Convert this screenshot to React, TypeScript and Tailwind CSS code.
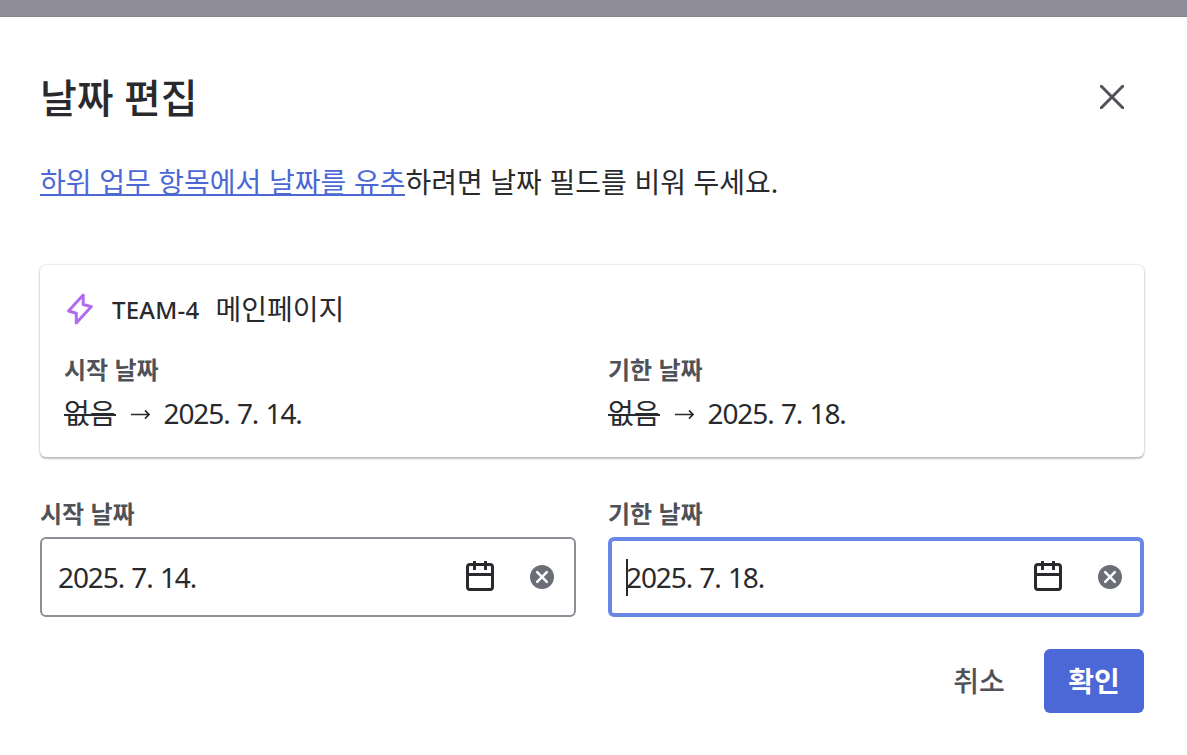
import React from 'react';

function BoltIcon() {
  return (
    <svg width="32" height="32" viewBox="0 0 32 32" fill="none" stroke="#af6cf0" strokeWidth="3" strokeLinejoin="round">
      <path d="M19.2 2.1 4.5 18 12.3 20.2V29.9L27.4 13.6 19.2 11.5Z" />
    </svg>
  );
}

function CalendarIcon() {
  return (
    <svg className="mr-9 mb-[2px] shrink-0" width="28" height="30" viewBox="0 0 28 30" fill="none" stroke="#292a2e" strokeWidth="3">
      <rect x="1.5" y="3.5" width="25" height="25" rx="2.5" />
      <path d="M1.5 13.5h25M8.5 0v9M19.5 0v9" />
    </svg>
  );
}

function ClearIcon() {
  return (
    <svg className="shrink-0" width="24" height="24" viewBox="0 0 24 24">
      <circle cx="12" cy="12" r="12" fill="#6b6e76" />
      <path d="M7.2 7.2l9.6 9.6M16.8 7.2l-9.6 9.6" stroke="#fff" strokeWidth="2.5" strokeLinecap="round" />
    </svg>
  );
}

function DateText({ children }: { children: string }) {
  return <span className="tracking-[-1.1px] [word-spacing:1.1px]">{children}</span>;
}

function Label({ children }: { children: string }) {
  return <div className="h-8 pt-px text-[24px] leading-8 font-bold text-[#505258]">{children}</div>;
}

function Change({ label, date }: { label: string; date: string }) {
  return (
    <div className="w-[544px] shrink-0">
      <Label>{label}</Label>
      <div className="mt-2 flex h-10 items-center">
        <span className="relative">
          없음
          <span className="absolute inset-x-0 top-[21px] h-[2px] bg-[#292a2e]" />
        </span>
        <svg className="mr-[13px] ml-[15px]" width="20" height="14" viewBox="0 0 20 14" fill="none" stroke="#292a2e" strokeWidth="1.7">
          <path d="M0 8.5h18M14 4.3 18 8.5 14 12.7" />
        </svg>
        <DateText>{date}</DateText>
      </div>
    </div>
  );
}

function Field({ label, date, focused = false }: { label: string; date: string; focused?: boolean }) {
  return (
    <div className="w-[536px]">
      <Label>{label}</Label>
      <div
        className={
          focused
            ? 'mt-2 flex h-20 items-center rounded-[6px] border-4 border-[#6988e6] pr-[18px] pl-[14px]'
            : 'mt-2 flex h-20 items-center rounded-[6px] border-2 border-[#8c8f97] pr-5 pl-4'
        }
      >
        <div className="relative flex-1">
          {focused && <span className="absolute top-[2px] left-0 h-[37px] w-[2px] bg-[#292a2e]" />}
          <DateText>{date}</DateText>
        </div>
        <CalendarIcon />
        <ClearIcon />
      </div>
    </div>
  );
}

export default function App() {
  return (
    <div
      lang="ko"
      className="h-[755px] w-[1187px] overflow-hidden bg-white font-['Noto_Sans','Noto_Sans_CJK_KR',sans-serif] text-[28px] leading-10 text-[#292a2e]"
    >
      <div className="h-[17px] border-b border-[#84838d] bg-[#8f8e98]" />
      <div className="w-[1144px] pl-10">
        <header className="flex h-[104px] items-center justify-between pt-[56px] pr-5">
          <h1 className="pt-[2px] text-[40px] leading-[48px] font-medium">날짜 편집</h1>
          <svg width="24" height="24" viewBox="0 0 24 24" fill="none" stroke="#505258" strokeWidth="3" strokeLinecap="round">
            <path d="M1.3 1.3l21.4 21.4M22.7 1.3 1.3 22.7" />
          </svg>
        </header>
        <p className="mt-10 h-10 pt-px whitespace-nowrap [word-spacing:0.35px]">
          <a className="inline-block h-[34px] border-b-2 border-[#4c67d6] text-[#4c67d6]">하위 업무 항목에서 날짜를 유추</a>하려면 날짜 필드를 비워 두세요.
        </p>
        <section className="mt-[64px] h-[192px] rounded-[6px] bg-white px-6 pt-6 shadow-[0_0_2px_rgba(30,31,33,0.31),0_2px_2px_rgba(30,31,33,0.25)]">
          <div className="flex h-10 items-center">
            <BoltIcon />
            <span className="ml-4 pt-[2px] text-[24px] font-[550] tracking-[0.25px]">TEAM-4</span>
            <span className="ml-4">메인페이지</span>
          </div>
          <div className="mt-6 flex">
            <Change label="시작 날짜" date="2025. 7. 14." />
            <Change label="기한 날짜" date="2025. 7. 18." />
          </div>
        </section>
        <div className="mt-10 flex gap-8">
          <Field label="시작 날짜" date="2025. 7. 14." />
          <Field label="기한 날짜" date="2025. 7. 18." focused />
        </div>
        <footer className="mt-8 flex justify-end gap-4 font-medium">
          <button className="h-16 w-[100px] pl-[2px] text-[#505258]">취소</button>
          <button className="h-16 w-[100px] rounded-[6px] bg-[#4c67d6] font-[650] text-white">확인</button>
        </footer>
      </div>
    </div>
  );
}
